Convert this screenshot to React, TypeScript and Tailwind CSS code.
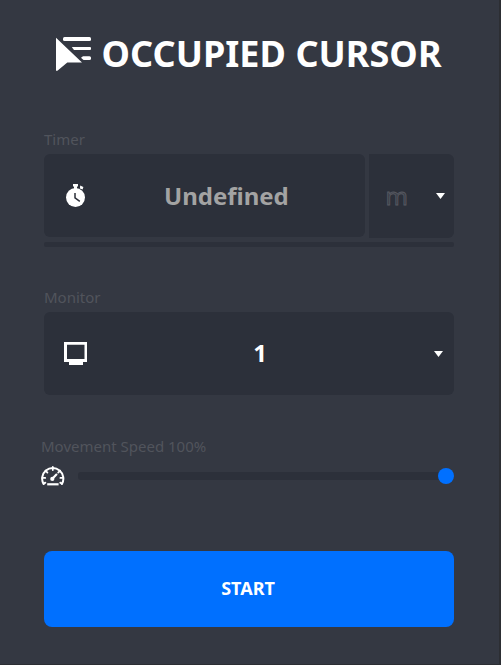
function CursorLogo() {
  return (
    <svg width="36" height="36" viewBox="0 0 36 36" fill="#fff">
      <path d="M0 .8 L26 25.4 H11.3 L1.4 33.8 H0 Z" />
      <rect x="7" y="0" width="28" height="4" rx="1.5" />
      <path d="M15.8 10 H34 a1 1 0 0 1 1 1 v1 a1 1 0 0 1 -1 1 H18 Z" />
      <path d="M25 20.8 L27 19.3 H33.5 a1.5 1.5 0 0 1 1.5 1.5 v.7 a1.5 1.5 0 0 1 -1.5 1.5 H27.5 Z" />
    </svg>
  );
}

function StopwatchIcon() {
  return (
    <svg width="20" height="24" viewBox="0 0 20 24" fill="#fff">
      <circle cx="9.5" cy="13.5" r="9.5" />
      <path d="M7 0 H12 V2.5 H11 V5 H8 V2.5 H7 Z" />
      <path d="M14.2 1.6 L17.4 3 L16.6 5.6 L13.9 4.6 Z" />
      <path d="M9 9 V13.8 L13.8 17.3" fill="none" stroke="#2c303a" strokeWidth="1.5" />
    </svg>
  );
}

function MonitorIcon() {
  return (
    <svg width="23" height="23" viewBox="0 0 23 23" fill="#fff">
      <path fillRule="evenodd" d="M0 0 H23 V20 H19 V23 H5 V20 H0 Z M3 2.7 V17 H20.5 V2.7 Z" />
    </svg>
  );
}

function GaugeIcon() {
  return (
    <svg width="24" height="20" viewBox="0 0 24 20" fill="none" stroke="#fff" strokeWidth="2" strokeLinecap="round">
      <path d="M2.6 18 A10.6 10.6 0 1 1 20.9 18" />
      <path d="M11.8 1 V4 M4.5 4.7 L6.4 6.6 M1.5 11.9 H4.2 M19.4 11.9 H22.2 M2.7 17.6 L4.4 16.6 M20.9 17.6 L19.2 16.6 M19.1 4.7 L17.2 6.6" strokeWidth="1.8" />
      <path d="M7.3 18.3 H16.5" strokeWidth="2.2" strokeLinecap="square" />
      <circle cx="11.3" cy="12.9" r="2.1" fill="#fff" stroke="none" />
      <path d="M11.6 12.5 L15.4 8.6" strokeWidth="2.2" />
    </svg>
  );
}

function Caret() {
  return (
    <svg width="9" height="6" viewBox="0 0 9 6" fill="#fff">
      <path d="M0 0 H9 L4.5 6 Z" />
    </svg>
  );
}

export default function App() {
  return (
    <main className="h-[665px] w-[501px] overflow-hidden border-r-2 border-b border-[#2c2e33] bg-[#343842] pl-11 font-['Noto_Sans',sans-serif] text-white">
      <header className="flex h-[130px] pt-[37px] pl-3">
        <CursorLogo />
        <h1 className="-mt-2 ml-[9.5px] text-[36px] leading-[50px] font-bold tracking-[0.05px] whitespace-nowrap">OCCUPIED CURSOR</h1>
      </header>

      <section className="h-[158px] w-[410px]">
        <div className="h-6 text-[15px] leading-[18px] text-[#51545c]">Timer</div>
        <div className="flex gap-1">
          <div className="flex h-[83px] w-[321px] items-center rounded-[6px] bg-[#2c303a] pl-[22px]">
            <StopwatchIcon />
            <span className="ml-[78px] text-[24px] leading-[32px] font-bold text-[#a3a3a3]">Undefined</span>
          </div>
          <div className="flex h-[84px] w-[85px] items-center justify-between rounded-r-[6px] bg-[#2c303a] pr-[9px] pl-[16.5px]">
            <span className="text-[24px] leading-[32px] text-[#3c3f49] [-webkit-text-stroke:0.8px_#575a62]">m</span>
            <Caret />
          </div>
        </div>
        <div className="mt-1 h-[5px] rounded-[2px] bg-[#2c303a]" />
      </section>

      <section className="h-[149px] w-[410px]">
        <div className="h-6 text-[15px] leading-[18px] text-[#51545c]">Monitor</div>
        <div className="flex h-[83px] items-center rounded-[6px] bg-[#2c303a] pr-[11px] pl-5">
          <MonitorIcon />
          <span className="-mt-[2px] flex-1 pr-[1px] text-center text-[24px] leading-[32px] font-bold">1</span>
          <Caret />
        </div>
      </section>

      <section className="-ml-[3px] h-[114px] w-[413px]">
        <div className="h-[29px] text-[15px] leading-[18px] text-[#51545c]">Movement Speed 100%</div>
        <div className="flex items-center">
          <GaugeIcon />
          <div className="ml-[13px] flex h-2 flex-1 items-center justify-end rounded-[3px] bg-[#2c303a]">
            <div className="size-4 rounded-full bg-[#0070ff]" />
          </div>
        </div>
      </section>

      <button className="block h-[76px] w-[410px] rounded-[8px] bg-[#0070ff] pr-[2px] pb-[2px] text-[18px] font-bold">START</button>
    </main>
  );
}
